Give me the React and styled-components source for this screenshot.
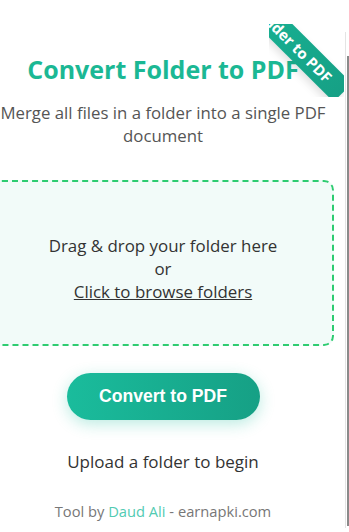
import React from 'react';
import styled, { createGlobalStyle } from 'styled-components';

const Global = createGlobalStyle`
    html, body {
        margin: 0;
        padding: 0;
        background: #fff;
    }
    body {
        font-family: "Open Sans", "Noto Sans", sans-serif;
        color: #333;
    }
`

const Viewport = styled.div`
    width: 349px;
    height: 532px;
    overflow: hidden;
    position: relative;
`
const Card = styled.div`
    position: relative;
    width: 362px;
    margin: 24px 0 0 -18px;
    padding: 31px 10px 0;
    box-sizing: border-box;
    text-align: center;
`
const Ribbon = styled.div`
    position: absolute;
    top: 0;
    right: 0;
    width: 75px;
    height: 73px;
    overflow: hidden;
    z-index: 2;
`
const RibbonBand = styled.span`
    position: absolute;
    left: -97px;
    top: -15px;
    width: 200px;
    line-height: 26px;
    background: linear-gradient(90deg, #1abc9c, #16a085);
    color: #fff;
    font-weight: 700;
    font-size: 15px;
    text-align: center;
    white-space: nowrap;
    transform: rotate(45deg);
    box-shadow: 0 4px 8px rgba(0, 0, 0, 0.12);
`
const Title = styled.h1`
    margin: 0;
    font-size: 25px;
    line-height: 29px;
    font-weight: 700;
    color: #1bb894;
`
const Subtitle = styled.p`
    margin: 17px 0 0;
    font-size: 16.8px;
    line-height: 23px;
    color: #555;
`
const DropZone = styled.div`
    margin-top: 33px;
    height: 166px;
    box-sizing: border-box;
    border: 2px dashed #2ecc71;
    border-radius: 10px;
    background: #f2fbf9;
    padding-top: 52px;
    font-size: 16.9px;
    line-height: 23px;
    color: #333;
`
const Browse = styled.span`
    text-decoration: underline;
    cursor: pointer;
`
const Button = styled.button`
    display: block;
    margin: 27px auto 0;
    width: 193px;
    height: 47px;
    border: none;
    border-radius: 24px;
    background: linear-gradient(90deg, #1abc9c, #16a085);
    box-shadow: 0 4px 15px rgba(26, 188, 156, 0.3);
    color: #fff;
    font-family: "Liberation Sans", Arial, sans-serif;
    font-weight: 700;
    font-size: 17.6px;
    cursor: pointer;
`
const Status = styled.p`
    margin: 30px 0 0;
    font-size: 17px;
    line-height: 23px;
    color: #333;
`
const Footer = styled.p`
    margin: 28px 0 0;
    font-size: 14.7px;
    line-height: 20px;
    color: #777;
`
const FooterLink = styled.span`
    color: #52cbb2;
`
const Scrollbar = styled.div`
    position: absolute;
    top: 32px;
    right: 0;
    bottom: 4px;
    width: 4px;
    border-left: 1px solid #e4e4e4;
    box-sizing: border-box;
`
const Thumb = styled.div`
    margin: 24px 0 0 1px;
    height: 470px;
    background: #8a8a8a;
`

export default function App() {
    return (
        <Viewport>
            <Global />
            <Card>
                <Ribbon>
                    <RibbonBand>Convert Folder to PDF</RibbonBand>
                </Ribbon>
                <Title>Convert Folder to PDF</Title>
                <Subtitle>Merge all files in a folder into a single PDF document</Subtitle>
                <DropZone>
                    Drag &amp; drop your folder here<br />
                    or<br />
                    <Browse>Click to browse folders</Browse>
                </DropZone>
                <Button>Convert to PDF</Button>
                <Status>Upload a folder to begin</Status>
                <Footer>
                    Tool by <FooterLink>Daud Ali</FooterLink> - earnapki.com
                </Footer>
            </Card>
            <Scrollbar><Thumb /></Scrollbar>
        </Viewport>
    );
}
